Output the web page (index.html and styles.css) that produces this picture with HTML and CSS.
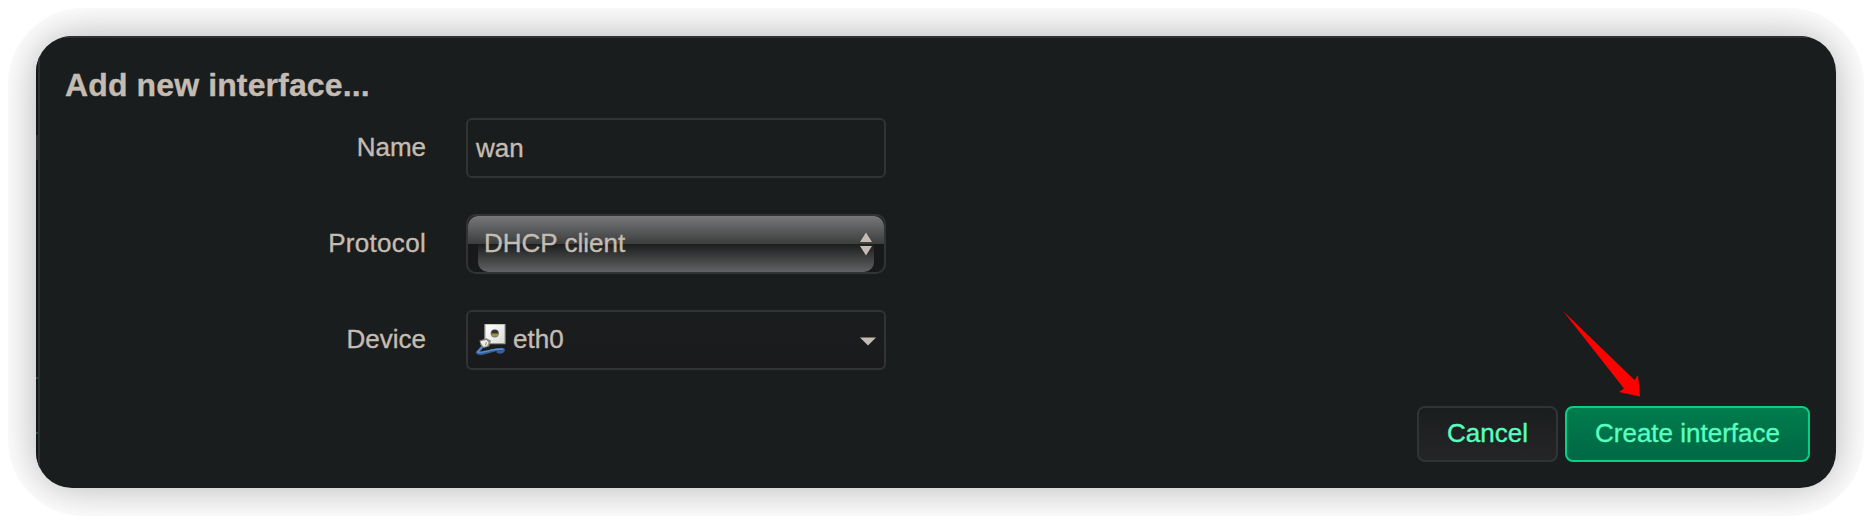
FILE: index.html
```html
<!DOCTYPE html>
<html lang="en">
<head>
<meta charset="utf-8">
<title>Add new interface...</title>
<link rel="stylesheet" href="styles.css">
</head>
<body>
<div class="halo">
<div class="card">
<main class="frame">
  <div class="backdrop"><i class="mark mark-a"></i><i class="mark mark-b"></i><i class="mark mark-c"></i></div>
  <section class="dialog">
    <h1 class="title">Add new interface...</h1>
    <form class="form">
      <label class="label">Name</label>
      <div class="field"><span class="value">wan</span></div>
      <label class="label protocol-label">Protocol</label>
      <div class="field select">
        <span class="gloss-top"></span>
        <span class="gloss-bottom"></span>
        <span class="select-text">DHCP client</span>
        <svg class="updown" width="12" height="24" viewBox="0 0 12 24"><path d="M6 0.5L12 10H0zM0 14H12L6 23.5z" fill="#c4bcb3"/></svg>
      </div>
      <label class="label">Device</label>
      <div class="field device">
        <svg class="port" width="32" height="32" viewBox="0 0 32 32">
          <defs>
            <linearGradient id="plate" x1="0" y1="0" x2="1" y2="1"><stop offset="0" stop-color="#ffffff"/><stop offset="1" stop-color="#dcdcd6"/></linearGradient>
          </defs>
          <rect x="9.2" y="0" width="21.400" height="20.200" fill="#94948e"/>
          <rect x="10.500" y="0.500" width="19" height="18.500" fill="url(#plate)"/>
          <circle cx="19.800" cy="9.400" r="4.200" fill="#77766f"/>
          <path d="M16.500 9.500V7.500C17.500 5.600 22 5.600 23.100 7.500V9.500z" fill="#30333a"/>
          <rect x="16.700" y="9.800" width="6.200" height="2.400" fill="#a29435"/>
          <path d="M8 22L2.500 28.500C5 31.500 15 27 21 25.800C25 25.200 29 24.500 28.500 26.500C28 28.500 25 28.500 23 28" fill="none" stroke="#385f98" stroke-width="2.800" stroke-linecap="round"/>
          <path d="M7.500 22.500L2.600 28C5 29.800 13 26.500 20 25.400L27.500 25.200" fill="none" stroke="#5b8cce" stroke-width="1.500" stroke-linecap="round"/>
          <path d="M4.500 16.500L11.500 14.300L16 16.700L14 22.500L9 24L5.500 21z" fill="#85857d"/>
          <path d="M5.500 17.300L11.500 16L13.700 18.500L12 22L8.500 22.700L6.500 20z" fill="#eeeeea"/>
          <path d="M11.500 18.200L10.300 21.200" stroke="#99998f" stroke-width="1.200"/>
        </svg>
        <span class="value">eth0</span>
        <svg class="caret" width="16" height="9" viewBox="0 0 16 9"><path d="M0 0.500H16L8 8.500z" fill="#c4bcb3"/></svg>
      </div>
    </form>
    <footer class="actions">
      <button class="btn"><span class="caption">Cancel</span></button>
      <button class="btn primary"><span class="caption">Create interface</span></button>
    </footer>
  </section>
  <svg class="arrow" width="80" height="88" viewBox="0 0 80 88"><path d="M0 0L71.500 69L75 64L77 85.500L56 81L61 77.500z" fill="#ff0000"/></svg>
</main>
</div>
</div>
</body>
</html>
```
FILE: styles.css
```css
* { box-sizing: border-box; }
body {
  margin: 0;
  padding: 8px;
  height: 524px;
  overflow: hidden;
  background: #fff;
  color: #c4bcb3;
  font: 26px/30px "Liberation Sans", Arial, sans-serif;
  -webkit-text-stroke: .35px currentColor;
}
.halo {
  height: 508px;
  padding: 28px;
  border-radius: 76px;
  overflow: hidden;
}
.card {
  border-radius: 36px;
  box-shadow: 0 0 44px rgba(0, 0, 0, .31);
}
.frame {
  position: relative;
  display: flex;
  height: 452px;
  border-radius: 36px;
  overflow: hidden;
  background: #1a1d1d;
}
.backdrop {
  display: flex;
  flex-direction: column;
  width: 2px;
  background: #151618;
}
.mark { display: block; height: 2px; background: #25493f; }
.mark-a { height: 25px; margin-top: 99px; background: #2c3031; }
.mark-b { margin-top: 217px; }
.mark-c { margin-top: 53px; }
.dialog {
  flex: 1;
  display: flex;
  flex-direction: column;
  padding: 27px 26px 26px 25px;
  border-top: 2px solid #2d3132;
  border-left: 2px solid #2d3132;
}
.title {
  margin: 0;
  font-size: 32px;
  line-height: 40px;
  font-weight: bold;
  letter-spacing: .12px;
}
.form {
  display: grid;
  grid-template-columns: 361px 420px;
  column-gap: 40px;
  row-gap: 36px;
  padding-top: 13px;
}
.label { height: 60px; text-align: right; line-height: 58px; }
.protocol-label { letter-spacing: .3px; }
.field {
  display: flex;
  align-items: center;
  position: relative;
  height: 60px;
  padding: 0 8px;
  border: 2px solid #313435;
  border-radius: 6px;
}
.value { padding-bottom: 1px; }
.select { border-radius: 10px; background: #18191b; padding: 0 10px 0 16px; overflow: hidden; }
.gloss-top, .gloss-bottom { position: absolute; height: 28px; }
.gloss-top {
  top: 0; left: 0; right: 0;
  border-radius: 10px 10px 0 0;
  background: linear-gradient(#757778, #3c3e3e);
}
.gloss-bottom {
  bottom: 0; left: 10px; right: 10px;
  border-radius: 0 0 10px 10px;
  background: linear-gradient(#1c1e1e, #606263);
}
.select-text { position: relative; padding-bottom: 2px; }
.updown { position: relative; margin-left: auto; margin-right: 2px; }
.device { padding: 0 8px 0 7px; background: linear-gradient(#1a1d1d, #1a1a1c); }
.device .value { padding-bottom: 2px; }
.port { margin: 0 6px 0 0; filter: blur(.5px); }
.caret { margin-left: auto; margin-top: 2px; }
.actions {
  display: flex;
  justify-content: flex-end;
  gap: 7px;
  margin-top: auto;
}
.btn {
  width: 141px;
  height: 56px;
  padding: 0 0 2px;
  border: 2px solid #313435;
  border-radius: 8px;
  background: linear-gradient(#1a1d1d, #242527);
  color: #58ffc0;
  font: inherit;
  -webkit-text-stroke: .35px currentColor;
}
.primary {
  width: 245px;
  border-color: #07cf86;
  background: linear-gradient(#007c4d, #006845);
}
.arrow { position: absolute; left: 1527px; top: 275px; }
```
